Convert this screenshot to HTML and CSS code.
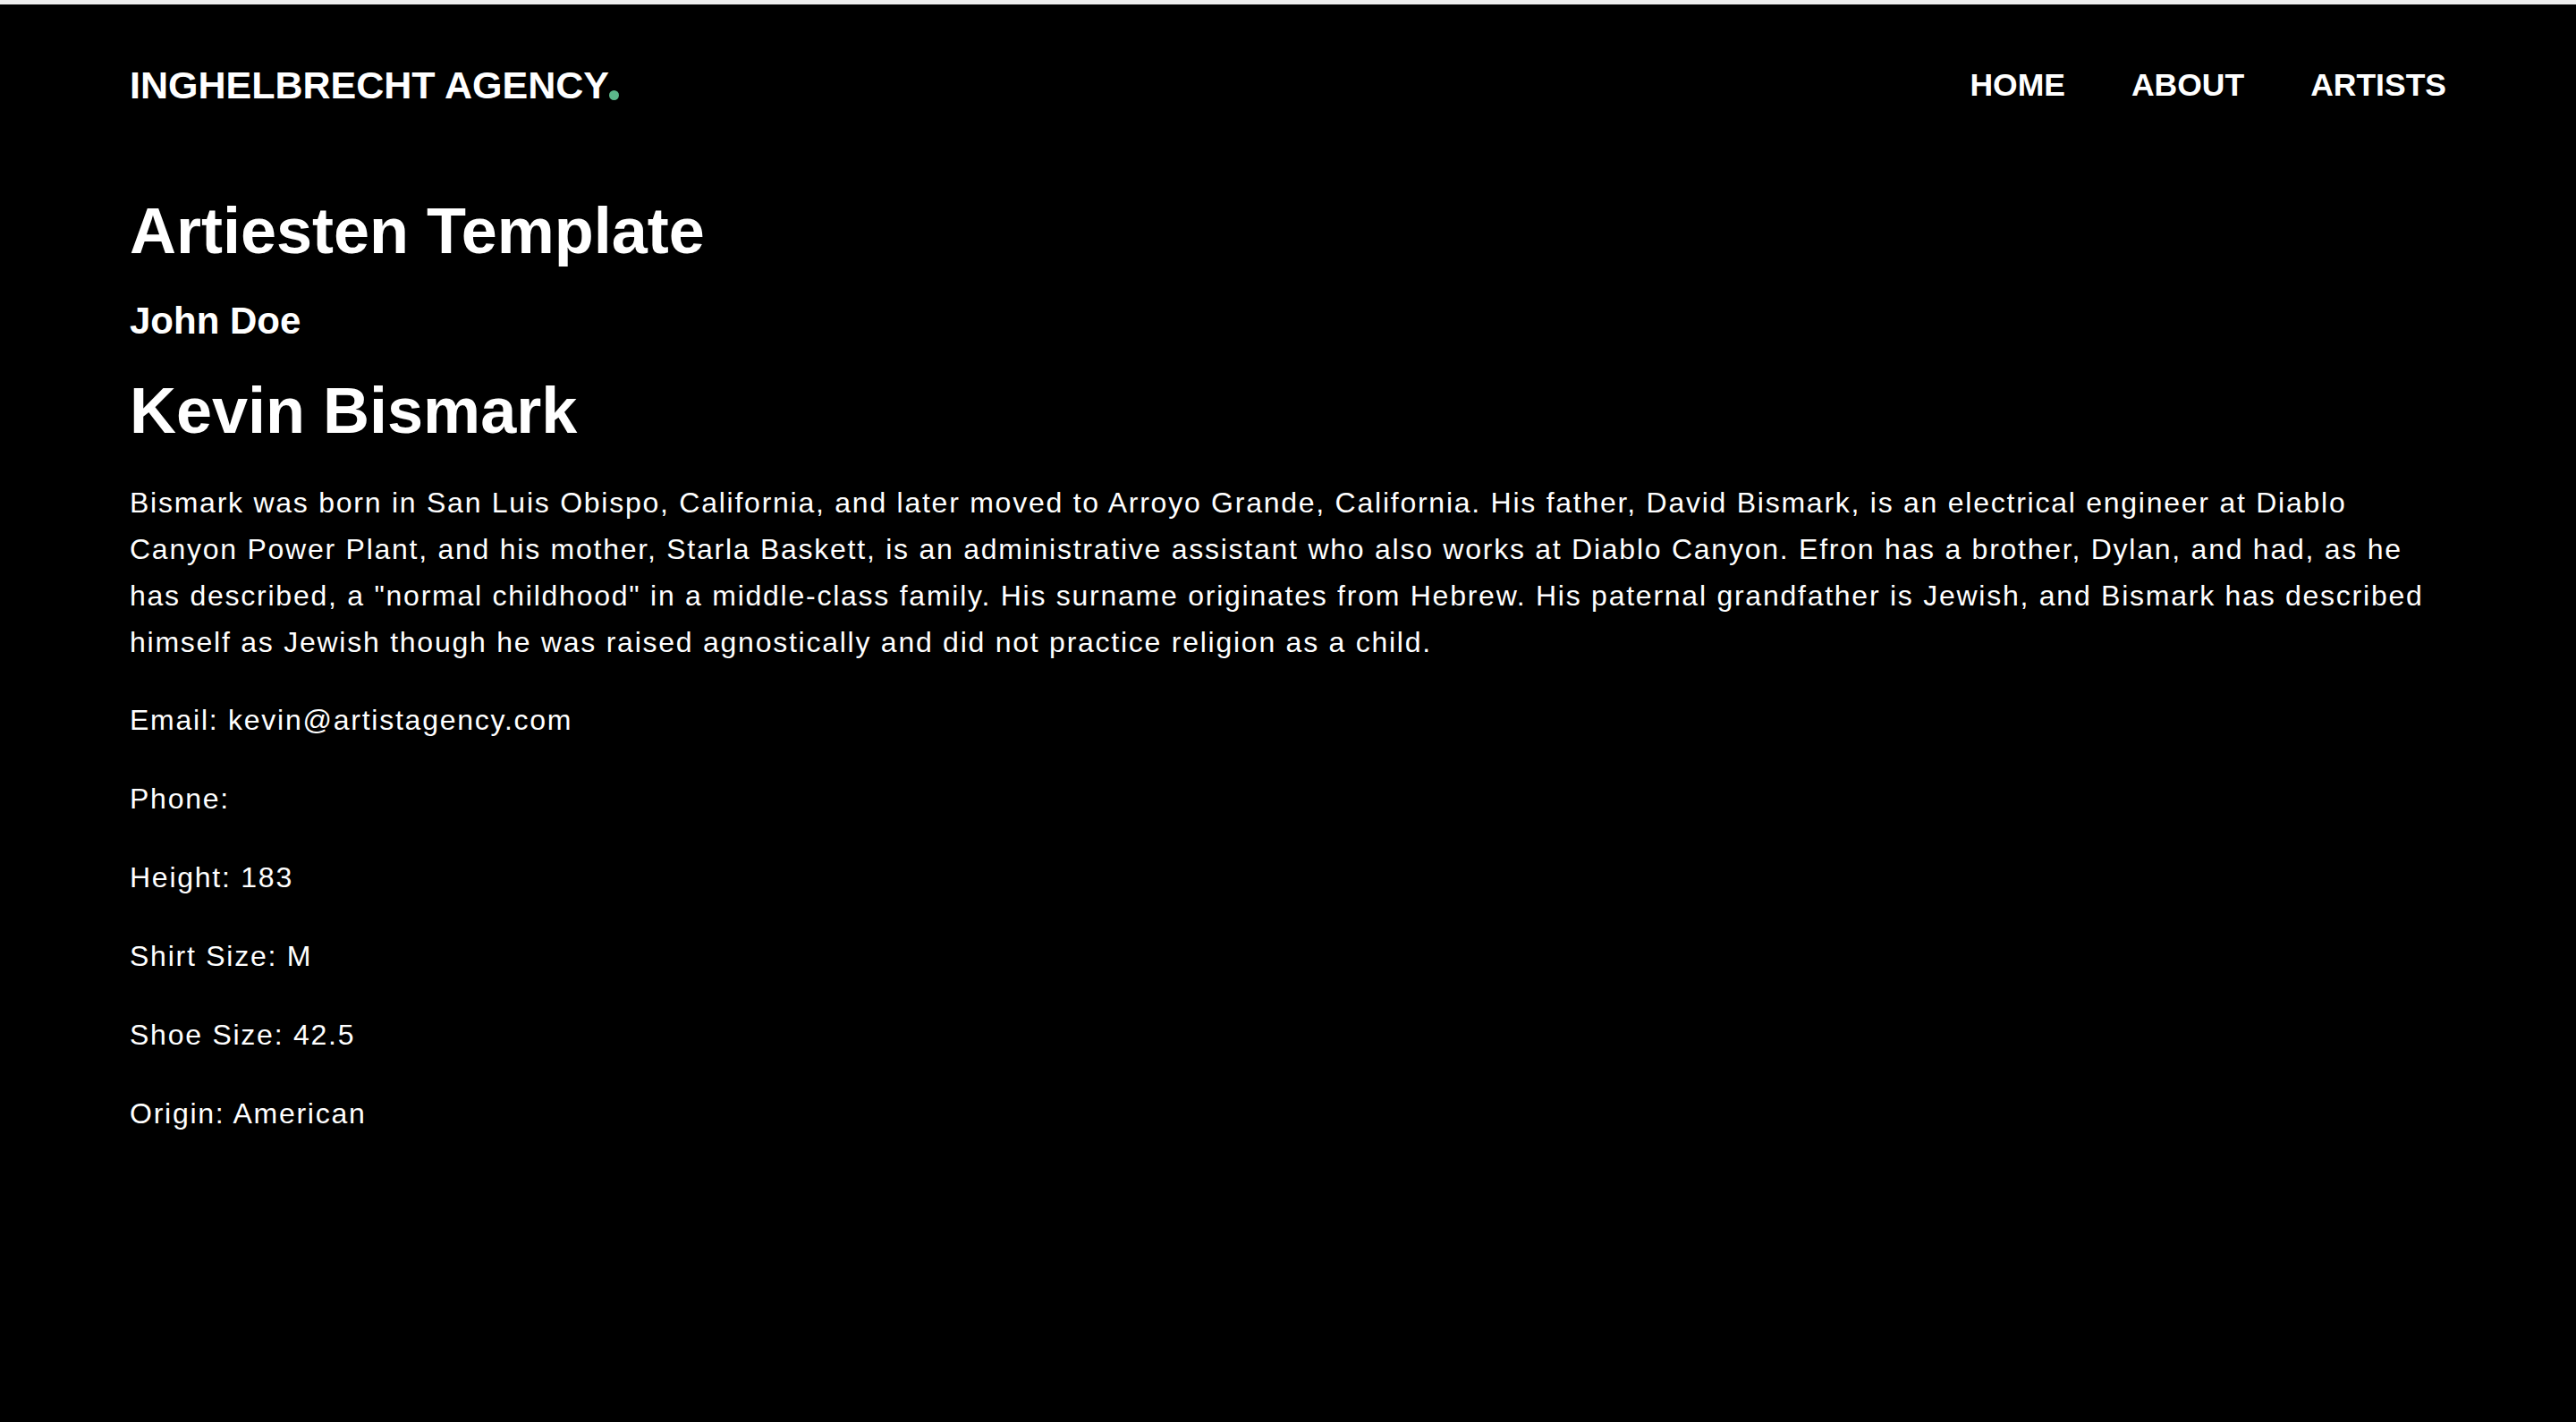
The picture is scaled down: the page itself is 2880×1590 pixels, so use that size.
FILE: index.html
```html
<!DOCTYPE html>
<html lang="en">
<head>
<meta charset="utf-8">
<title>Artiesten Template - Inghelbrecht Agency</title>
<link rel="stylesheet" href="styles.css">
</head>
<body>
<div class="topbar"></div>
<header class="site-header">
  <a class="logo" href="#">INGHELBRECHT AGENCY<span class="logo-dot"></span></a>
  <nav class="main-nav">
    <a class="nav-link" href="#">HOME</a>
    <a class="nav-link" href="#">ABOUT</a>
    <a class="nav-link" href="#">ARTISTS</a>
  </nav>
</header>
<main class="content">
  <h1 class="page-title">Artiesten Template</h1>
  <h2 class="subtitle">John Doe</h2>
  <h1 class="artist-name">Kevin Bismark</h1>
  <p class="bio">Bismark was born in San Luis Obispo, California, and later moved to Arroyo Grande, California. His father, David Bismark, is an electrical engineer at Diablo Canyon Power Plant, and his mother, Starla Baskett, is an administrative assistant who also works at Diablo Canyon. Efron has a brother, Dylan, and had, as he has described, a "normal childhood" in a middle-class family. His surname originates from Hebrew. His paternal grandfather is Jewish, and Bismark has described himself as Jewish though he was raised agnostically and did not practice religion as a child.</p>
  <p class="info">Email: kevin@artistagency.com</p>
  <p class="info">Phone: </p>
  <p class="info">Height: 183</p>
  <p class="info">Shirt Size: M</p>
  <p class="info">Shoe Size: 42.5</p>
  <p class="info">Origin: American</p>
</main>
</body>
</html>
```
FILE: styles.css
```css
html, body {
  margin: 0;
  padding: 0;
  background: #000;
  color: #fff;
  font-family: "Liberation Sans", Arial, Helvetica, sans-serif;
}

body {
  min-height: 1590px;
}

.topbar {
  height: 5px;
  background: #efefef;
}

.site-header {
  display: flex;
  justify-content: space-between;
  align-items: center;
  padding: 66px 145px 64px 145px;
}

.logo {
  color: #fff;
  text-decoration: none;
  font-weight: 700;
  font-size: 43px;
  line-height: 1.15;
}

.logo-dot {
  display: inline-block;
  width: 11px;
  height: 11px;
  border-radius: 50%;
  background: #5cb88b;
  margin-left: 0;
  vertical-align: -2px;
}

.main-nav {
  display: flex;
  gap: 74px;
}

.nav-link {
  color: #fff;
  text-decoration: none;
  font-weight: 700;
  font-size: 35.5px;
  line-height: 1.15;
}

.content {
  padding: 0 145px;
}

.page-title {
  font-size: 72px;
  font-weight: 700;
  line-height: 1.2;
  margin: 31px 0 33px;
}

.subtitle {
  font-size: 42px;
  font-weight: 700;
  line-height: 1.15;
  margin: 0 0 33px;
}

.artist-name {
  font-size: 72px;
  font-weight: 700;
  line-height: 1.2;
  margin: 0 0 33px;
}

.bio,
.info {
  font-size: 32px;
  line-height: 52px;
  letter-spacing: 1.75px;
  margin: 0 0 36px;
}

.bio {
  margin-bottom: 35px;
}
```
